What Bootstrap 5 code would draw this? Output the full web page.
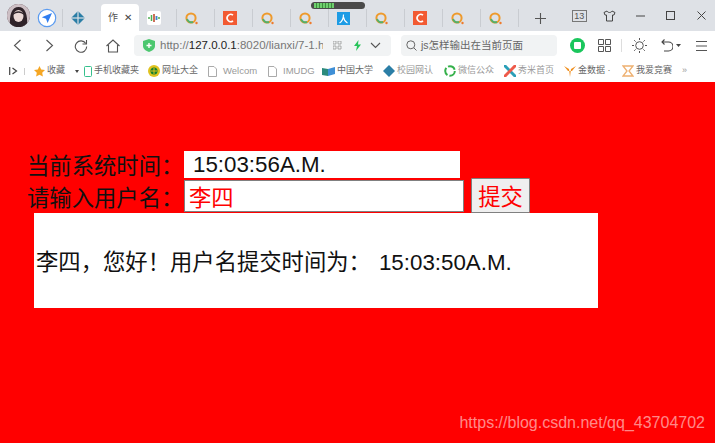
<!DOCTYPE html>
<html lang="zh-CN">
<head>
  <title>7-1</title>
  <meta charset="utf-8" />
  <meta name="viewport" content="width=device-width, initial-scale=1" />
  <link href="https://cdn.jsdelivr.net/npm/bootstrap@5.3.3/dist/css/bootstrap.min.css" rel="stylesheet" />
  <script src="https://cdn.jsdelivr.net/npm/bootstrap@5.3.3/dist/js/bootstrap.bundle.min.js"></script>
  <style>
    html, body { height: 100%; }
    body {
      font-family: "Liberation Sans", "Noto Sans CJK SC", sans-serif;
      background: #f00;
      overflow: hidden;
      position: relative;
    }
    svg { display: block; flex: none; }

    /* browser tab strip */
    .tab-strip { height: 31px; background: #dee1e6; position: relative; }
    .avatar { width: 23px; height: 23px; margin: 4px 0 0 7px; border-radius: 50%; background: #4b3a42; overflow: hidden; flex: none; }
    .tab-cell { width: 38px; height: 31px; display: flex; align-items: center; justify-content: center; position: relative; padding: 5px 9px 0 0; flex: none; }
    .tab-cell.sep::after { content: ""; position: absolute; right: 0; top: 9px; height: 18px; width: 1px; background: #c9ccd1; }
    .tab-active { height: 27px; margin-top: 4px; padding: 0; background: #fff; border-radius: 4px 4px 0 0; font-size: 10px; color: #555; gap: 6px; }
    .tab-close { font-size: 10px; color: #444; line-height: 1; }
    .first-tab { width: 33px; padding-right: 0; }
    .plus-tab { padding-right: 0; margin-left: 2px; }
    .win-controls { margin-left: 5px; }
    .win-btn { width: 30.5px; display: flex; justify-content: center; }
    .days-box { border: 1px solid #777; width: 15px; height: 12px; font-size: 9px; line-height: 10px; text-align: center; color: #555; }
    .battery { position: absolute; left: 311px; top: 2px; width: 54px; height: 7px; border-radius: 4px; background: #4a4a4a; padding: 1px 3px; }
    .battery span { display: block; width: 20px; height: 5px; background: repeating-linear-gradient(90deg, #6ecf6e 0 2px, #3c8f3c 2px 3px); }

    /* toolbar */
    .tool-bar { height: 29px; background: #fff; padding-left: 1px; }
    .nav-ico { width: 32px; display: flex; justify-content: center; color: #555; flex: none; }
    .addr-box { width: 257px; height: 21px; margin-left: 5px; background: #f1f3f4; border-radius: 4px; font-size: 11.5px; color: #777; padding-left: 9px; white-space: nowrap; flex: none; }
    .addr-box b { font-weight: 400; color: #222; }
    .addr-url { width: 163px; overflow: hidden; margin-left: 5px; }
    .search-box { width: 156px; height: 21px; margin-left: 10px; background: #f1f3f4; border-radius: 4px; font-size: 10.5px; color: #666; padding-left: 5px; gap: 4px; flex: none; }
    .tool-right { margin-left: 13px; }

    /* bookmarks */
    .mark-bar { height: 22px; background: #fff; font-size: 9px; color: #666; padding-left: 9px; white-space: nowrap; overflow: hidden; }
    .mark-item { display: flex; align-items: center; gap: 2px; flex: none; }
    .fade-txt { color: #999; }
    .latin-txt { font-size: 9.5px; }

    /* page */
    .page-main { padding: 69px 0 0 27px; color: #111; font-size: 22.33px; line-height: 27px; }
    .time-row { height: 27px; }
    .form-label-txt { width: 157px; margin: 0; font-family: "Noto Sans CJK SC", "Liberation Sans", sans-serif; flex: none; line-height: 26px; }
    .time-box { width: 276px; height: 27px; background: #fff; padding-left: 9px; color: #111; }
    .name-row { height: 35px; }
    .name-row .form-label-txt { line-height: 36px; }
    .name-input {
      width: 280px; height: 32px; margin-top: 2px; padding: 0 4px; border: 1px solid #808080; background: #fff;
      color: #f00; font: 400 22.33px "Noto Sans CJK SC", sans-serif; border-radius: 0; outline: 0;
    }
    .send-btn {
      width: 59px; height: 35px; margin-left: 7px; padding: 0; background: #efefef; border: 1px solid #808080;
      color: #f00; font: 400 22.33px/1 "Noto Sans CJK SC", sans-serif; border-radius: 1px;
    }
    .result-box {
      width: 564px; height: 95px; margin-left: 7px; padding: 4px 0 0 2px; background: #fff; color: #111;
    }
    .sent-time { margin-left: 8px; }
    .watermark { position: absolute; right: 10px; bottom: 12px; font-size: 16px; line-height: 17px; color: rgba(255, 255, 255, .55); }
  </style>
</head>
<body>
  <!-- BROWSER TABS -->
  <div class="tab-strip d-flex align-items-start">
    <div class="avatar">
      <svg width="23" height="23" viewBox="0 0 23 23"><rect width="23" height="23" fill="#cdbfc4"/><path d="M3 23C2 10 5 3 11.5 3S21 10 20 23Z" fill="#2f2329"/><ellipse cx="11.5" cy="12" rx="5" ry="6" fill="#ecd9d6"/><path d="M6 11C7 6 16 6 17 11 13 8 10 8 6 11Z" fill="#2f2329"/></svg>
    </div>
    <div class="tab-cell first-tab sep">
      <svg width="20" height="20" viewBox="0 0 20 20"><circle cx="10" cy="10" r="8.7" fill="#fff" stroke="#5a9bf0" stroke-width="1.2"/><path d="M15 5 4.8 9.3 9 10.8 10.6 15Z" fill="#2f7df0"/></svg>
    </div>
    <div class="tab-cell">
      <svg width="14" height="14" viewBox="0 0 14 14"><path d="M7 0 14 7 7 14 0 7Z" fill="#2b7ea6"/><path d="M0 6.5H14M0 7.5H14M6.5 0V14M7.5 0V14" stroke="#dee1e6" stroke-width=".6"/></svg>
    </div>
    <div class="tab-cell tab-active">
      <span>作</span><span class="tab-close">✕</span>
    </div>
    <div class="tab-cell sep">
      <svg width="14" height="14" viewBox="0 0 14 14"><rect width="14" height="14" rx="2" fill="#fff"/><path d="M2 6V8M4.5 4V10M7 3V11M9.5 5V9M12 6V8" stroke-width="1.5" stroke="#4caf50"/><path d="M7 3V11" stroke="#e8554e" stroke-width="1.5"/><path d="M9.5 5V9" stroke="#3f7fe0" stroke-width="1.5"/></svg>
    </div>
    <div class="tab-cell sep"><svg width="13" height="13" viewBox="0 0 13 13"><circle cx="6" cy="6" r="4.6" fill="none" stroke="#ee9a2c" stroke-width="2"/><path d="M2 7A4.5 4.5 0 0 0 8 10" fill="none" stroke="#53b06b" stroke-width="2"/><circle cx="11.5" cy="11" r="1.2" fill="#ee7a2c"/></svg></div>
    <div class="tab-cell sep"><svg width="14" height="14" viewBox="0 0 14 14"><rect width="14" height="14" fill="#f25a32"/><path d="M10 4.2A3.6 3.6 0 1 0 10 9.8" fill="none" stroke="#fff" stroke-width="1.6"/></svg></div>
    <div class="tab-cell sep"><svg width="13" height="13" viewBox="0 0 13 13"><circle cx="6" cy="6" r="4.6" fill="none" stroke="#ee9a2c" stroke-width="2"/><path d="M2 7A4.5 4.5 0 0 0 8 10" fill="none" stroke="#53b06b" stroke-width="2"/><circle cx="11.5" cy="11" r="1.2" fill="#ee7a2c"/></svg></div>
    <div class="tab-cell sep"><svg width="13" height="13" viewBox="0 0 13 13"><circle cx="6" cy="6" r="4.6" fill="none" stroke="#ee9a2c" stroke-width="2"/><path d="M2 7A4.5 4.5 0 0 0 8 10" fill="none" stroke="#53b06b" stroke-width="2"/><circle cx="11.5" cy="11" r="1.2" fill="#ee7a2c"/></svg></div>
    <div class="tab-cell sep"><svg width="13" height="13" viewBox="0 0 13 13"><rect width="13" height="13" fill="#1d9ce5"/><path d="M6.5 2.5C6.5 7 5 9.500 2.500 11M6.500 5C7 8 8.500 10 10.500 11" fill="none" stroke="#fff" stroke-width="1.200"/></svg></div>
    <div class="tab-cell sep"><svg width="13" height="13" viewBox="0 0 13 13"><circle cx="6" cy="6" r="4.6" fill="none" stroke="#ee9a2c" stroke-width="2"/><path d="M2 7A4.5 4.5 0 0 0 8 10" fill="none" stroke="#53b06b" stroke-width="2"/><circle cx="11.5" cy="11" r="1.2" fill="#ee7a2c"/></svg></div>
    <div class="tab-cell sep"><svg width="14" height="14" viewBox="0 0 14 14"><rect width="14" height="14" fill="#f25a32"/><path d="M10 4.2A3.6 3.6 0 1 0 10 9.8" fill="none" stroke="#fff" stroke-width="1.6"/></svg></div>
    <div class="tab-cell sep"><svg width="13" height="13" viewBox="0 0 13 13"><circle cx="6" cy="6" r="4.6" fill="none" stroke="#ee9a2c" stroke-width="2"/><path d="M2 7A4.5 4.5 0 0 0 8 10" fill="none" stroke="#53b06b" stroke-width="2"/><circle cx="11.5" cy="11" r="1.2" fill="#ee7a2c"/></svg></div>
    <div class="tab-cell sep"><svg width="13" height="13" viewBox="0 0 13 13"><circle cx="6" cy="6" r="4.6" fill="none" stroke="#ee9a2c" stroke-width="2"/><path d="M2 7A4.5 4.5 0 0 0 8 10" fill="none" stroke="#53b06b" stroke-width="2"/><circle cx="11.5" cy="11" r="1.2" fill="#ee7a2c"/></svg></div>
    <div class="tab-cell plus-tab">
      <svg width="11" height="11" viewBox="0 0 11 11"><path d="M5.500 0V11M0 5.500H11" stroke="#555" stroke-width="1.100"/></svg>
    </div>
    <div class="d-flex align-items-center win-controls" style="height:31px">
      <div class="win-btn"><div class="days-box">13</div></div>
      <div class="win-btn"><svg width="13" height="12" viewBox="0 0 13 12"><path d="M4 1 1 2.500 2 5H3.500V11H9.500V5H11L12 2.500 9 1C8 3 5 3 4 1Z" fill="none" stroke="#444"/></svg></div>
      <div class="win-btn"><svg width="9" height="2" viewBox="0 0 9 2"><path d="M0 1H9" stroke="#444"/></svg></div>
      <div class="win-btn"><svg width="9" height="9" viewBox="0 0 9 9"><rect x=".5" y=".5" width="8" height="8" fill="none" stroke="#444"/></svg></div>
      <div class="win-btn"><svg width="9" height="9" viewBox="0 0 9 9"><path d="M.5.5 8.500 8.500M8.500.5.500 8.500" stroke="#444"/></svg></div>
    </div>
    <div class="battery"><span></span></div>
  </div>

  <!-- TOOLBAR -->
  <div class="tool-bar d-flex align-items-center">
    <div class="nav-ico"><svg width="9" height="13" viewBox="0 0 9 13"><path d="M7.500 1 1.500 6.500 7.500 12" fill="none" stroke="#555" stroke-width="1.100"/></svg></div>
    <div class="nav-ico"><svg width="9" height="13" viewBox="0 0 9 13"><path d="M1.500 1 7.500 6.500 1.500 12" fill="none" stroke="#555" stroke-width="1.100"/></svg></div>
    <div class="nav-ico"><svg width="14" height="14" viewBox="0 0 14 14"><path d="M11.800 4.500A5.700 5.700 0 1 0 12.700 7.500" fill="none" stroke="#555" stroke-width="1.100"/><path d="M12.500 1V5H8.500" fill="none" stroke="#555" stroke-width="1.100"/></svg></div>
    <div class="nav-ico"><svg width="14" height="14" viewBox="0 0 14 14"><path d="M.5 7 7 1 13.500 7M2.500 6V13H11.500V6" fill="none" stroke="#555" stroke-width="1.100"/></svg></div>
    <div class="addr-box d-flex align-items-center">
      <svg width="12" height="13" viewBox="0 0 12 13"><path d="M0 2 6 0 12 2V7C12 10 9 12 6 13 3 12 0 10 0 7Z" fill="#4cc76f"/><path d="M3.500 6.500H8.500M6 4V9" stroke="#fff" stroke-width="1.400"/></svg>
      <div class="addr-url">http://<b>127.0.0.1</b>:8020/lianxi/7-1.h</div>
      <svg style="margin-left:10px" width="9" height="9" viewBox="0 0 9 9"><path d="M0 0H3V3H0ZM5 0H8V3H5ZM0 5H3V8H0ZM5 5H8V8H5Z" fill="none" stroke="#999" stroke-width=".8"/></svg>
      <svg style="margin-left:11px" width="9" height="11" viewBox="0 0 9 11"><path d="M5.500 0 1 6H4L3 11 8 4.500H5Z" fill="#28c45a"/></svg>
      <svg style="margin-left:8px" width="11" height="7" viewBox="0 0 11 7"><path d="M1 1 5.500 5.500 10 1" fill="none" stroke="#555" stroke-width="1.100"/></svg>
    </div>
    <div class="search-box d-flex align-items-center">
      <svg width="11" height="11" viewBox="0 0 11 11"><circle cx="4.800" cy="4.800" r="4" fill="none" stroke="#666"/><path d="M7.800 7.800 10.500 10.500" stroke="#666"/></svg>
      <span>js怎样输出在当前页面</span>
    </div>
    <div class="tool-right d-flex align-items-center">
      <svg width="15" height="15" viewBox="0 0 15 15"><circle cx="7.500" cy="7.500" r="7.500" fill="#1ac65c"/><rect x="4" y="4" width="7" height="7" rx="1" fill="#fff"/></svg>
      <svg style="margin-left:13px" width="13" height="13" viewBox="0 0 13 13"><path d="M.5.5H5.500V5.500H.5ZM7.500.5H12.500V5.500H7.500ZM.5 7.500H5.500V12.500H.5ZM7.500 7.500H12.500V12.500H7.500Z" fill="none" stroke="#555"/></svg>
      <svg style="margin-left:10px" width="1" height="13" viewBox="0 0 1 13"><path d="M.5 0V13" stroke="#ddd"/></svg>
      <svg style="margin-left:10px" width="15" height="15" viewBox="0 0 15 15"><circle cx="7.500" cy="7.500" r="3.800" fill="none" stroke="#555"/><path d="M7.500 0V2M7.500 13V15M0 7.500H2M13 7.500H15M2.200 2.200 3.600 3.600M11.400 11.400 12.800 12.800M12.800 2.200 11.400 3.600M3.600 11.400 2.200 12.800" stroke="#555"/></svg>
      <svg style="margin-left:14px" width="12" height="13" viewBox="0 0 12 13"><path d="M1 3H7.500A4.300 4.300 0 0 1 7.500 12H3M3.500.5 1 3 3.500 5.500" fill="none" stroke="#444" stroke-width="1.100"/></svg>
      <svg style="margin-left:3px" width="5" height="3" viewBox="0 0 5 3"><path d="M0 0H5L2.500 3Z" fill="#444"/></svg>
      <svg style="margin-left:15px" width="11" height="10" viewBox="0 0 11 10"><path d="M0 .5H11M0 5H11M0 9.500H11" stroke="#555"/></svg>
    </div>
  </div>

  <!-- BOOKMARKS -->
  <div class="mark-bar d-flex align-items-center">
    <svg width="9" height="8" viewBox="0 0 9 8"><path d="M.7 0V8M3.500 1 7.500 4 3.500 7" fill="none" stroke="#444" stroke-width="1.200"/></svg>
    <svg style="margin-left:6px" width="1" height="7" viewBox="0 0 1 7"><path d="M.5 0V7" stroke="#ccc"/></svg>
    <div class="mark-item" style="margin-left:9px;width:34px"><svg width="11" height="11" viewBox="0 0 11 11"><path d="M5.500 0 7.200 3.600 11 4.100 8.200 6.800 8.900 10.600 5.500 8.800 2.100 10.600 2.800 6.800 0 4.100 3.800 3.600Z" fill="#f5a623"/></svg><span>收藏</span></div>
    <svg style="margin-left:7px" width="4" height="3" viewBox="0 0 4 3"><path d="M0 0H4L2 3Z" fill="#444"/></svg>
    <div class="mark-item" style="margin-left:5px;width:56px"><svg width="8" height="11" viewBox="0 0 8 11"><rect x=".5" y=".5" width="7" height="10" rx="1" fill="none" stroke="#35c08c"/></svg><span>手机收藏夹</span></div>
    <div class="mark-item" style="margin-left:8px;width:54px"><svg width="12" height="12" viewBox="0 0 12 12"><circle cx="6" cy="6" r="6" fill="#e0c21f"/><circle cx="6" cy="6" r="3.500" fill="#15802f"/><path d="M3 6H9M6 3V9" stroke="#e0c21f"/></svg><span>网址大全</span></div>
    <div class="mark-item" style="margin-left:6px;width:54px"><svg width="9" height="11" viewBox="0 0 9 11"><path d="M.5.5H6L8.500 3V10.500H.5Z" fill="none" stroke="#aaa"/></svg><span class="fade-txt latin-txt ms-1">Welcom</span></div>
    <div class="mark-item" style="margin-left:6px;width:50px"><svg width="9" height="11" viewBox="0 0 9 11"><path d="M.5.5H6L8.500 3V10.500H.5Z" fill="none" stroke="#aaa"/></svg><span class="fade-txt latin-txt ms-1">IMUDG</span></div>
    <div class="mark-item" style="margin-left:4px;width:51px"><svg width="13" height="9" viewBox="0 0 13 9"><path d="M0 1 6 2V9L0 8Z" fill="#2b8a7c"/><path d="M6 2 13 0V7L6 9Z" fill="#3f8fd6"/></svg><span>中国大学</span></div>
    <div class="mark-item" style="margin-left:10px;width:50px"><svg width="12" height="12" viewBox="0 0 12 12"><path d="M6 0 12 6 6 12 0 6Z" fill="#2b7ea6"/></svg><span class="fade-txt">校园网认</span></div>
    <div class="mark-item" style="margin-left:11px;width:50px"><svg width="12" height="12" viewBox="0 0 12 12"><circle cx="6" cy="6" r="4.800" fill="none" stroke="#35b04a" stroke-width="2" stroke-dasharray="8 2"/></svg><span class="fade-txt">微信公众</span></div>
    <div class="mark-item" style="margin-left:10px;width:50px"><svg width="12" height="12" viewBox="0 0 12 12"><path d="M0 0 12 12" stroke="#2a9fb8" stroke-width="3"/><path d="M12 0 0 12" stroke="#ee5a4a" stroke-width="3"/></svg><span class="fade-txt">秀米首页</span></div>
    <div class="mark-item" style="margin-left:10px;width:48px"><svg width="12" height="12" viewBox="0 0 12 12"><path d="M0 1 5 4 6 12 7 4 12 1 8 6H4Z" fill="#f09020"/></svg><span>金数据 ·</span></div>
    <div class="mark-item" style="margin-left:10px;width:50px"><svg width="12" height="12" viewBox="0 0 12 12"><path d="M1 1H11L7 6 11 11H1L5 6Z" fill="none" stroke="#eeb070" stroke-width="1.300"/></svg><span>我爱竞赛</span></div>
    <span style="margin-left:10px" class="fade-txt">»</span>
  </div>

  <!-- MAIN CONTENT -->
  <div class="page-main">
    <div class="time-row d-flex">
      <div class="form-label-txt">当前系统时间：</div>
      <div class="time-box">15:03:56A.M.</div>
    </div>
    <div class="name-row d-flex">
      <label class="form-label-txt" for="uname">请输入用户名：</label>
      <input id="uname" class="name-input" type="text" value="李四" />
      <button class="send-btn" type="button">提交</button>
    </div>
    <div class="result-box d-flex align-items-center">李四，您好！用户名提交时间为：<span class="sent-time">15:03:50A.M.</span></div>
  </div>

  <div class="watermark">https://blog.csdn.net/qq_43704702</div>
</body>
</html>
